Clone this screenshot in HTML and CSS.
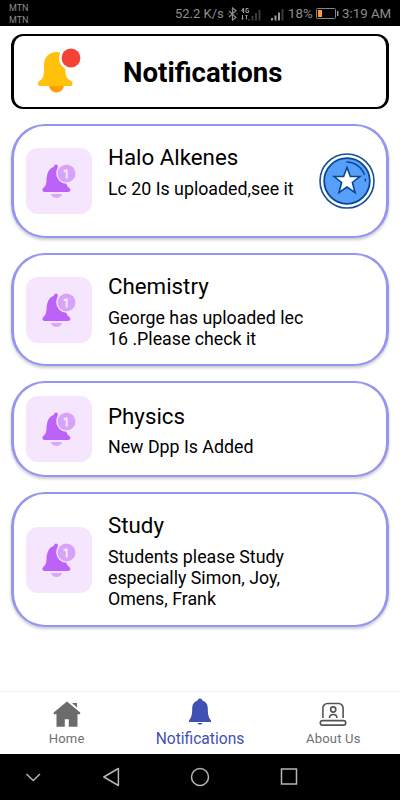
FILE: index.html
```html
<!DOCTYPE html>
<html lang="en">
  <head>
    <meta charset="UTF-8" />
    <meta name="viewport" content="width=device-width, initial-scale=1.0" />
    <title>Notifications</title>
    <link rel="stylesheet" href="styles.css">
  </head>
  <body>
    <svg class="sprite">
      <symbol id="bell" viewBox="0 0 66 66">
        <path d="M25 46h11c-1 3-3 4-5.500 4S26 49 25 46z" fill="#dba6fb" />
        <path d="M30.200 16.500c1.200 0 1.600.8 1.600 2-1 8 2 14 8.500 17 .8 2.600 1.700 3.500 3.300 4.800 1.600 1.700.7 3.700-1.400 3.700h-23c-2.600 0-3.600-2.200-2-3.800 2.500-2.400 3.100-4 3.300-8.200.3-7 2.500-11.500 7.500-13.200.2-1.500.8-2.300 2.200-2.300z" fill="#bd62f8" />
        <circle cx="40.500" cy="25.500" r="10.300" fill="#f5e6fe" />
        <circle cx="40.500" cy="25.500" r="9" fill="#d7a3fa" />
        <path d="M38.400 23.200l2.300-1v7.600" fill="none" stroke="#f5e6fe" stroke-width="2" stroke-linecap="round" stroke-linejoin="round" />
      </symbol>
    </svg>

    <div class="status-bar">
      <div class="carrier">
        <span>MTN</span>
        <span>MTN</span>
      </div>
      <div class="status">
        <span class="speed">52.2 K/s</span>
        <svg class="status-icons" width="61" height="16" viewBox="0 0 61 16">
          <path d="M2 5l7 6.500L5.500 14V2L9 4.500 2 11M.5 8h1M9.500 8h1" fill="none" stroke="#8c8c8c" stroke-width="1.200" />
          <g fill="none" stroke="#999" stroke-width="1">
            <path d="M16.500 2l-2 3h3M16.500 2v5M21.500 2.500h-2.500v4h2.500v-2h-1" />
            <path d="M15.500 9v4.500M14.500 12.500l1 1 1-1M19.500 13.500V9M18.500 10l1-1 1 1" />
          </g>
          <path d="M22 13v1.500M25.500 10v4.500M29 7v7.500M32.500 4v10.500" stroke="#393939" stroke-width="2" />
          <path d="M45 12v2.500M48.500 9.500v5M52 6.500v8" stroke="#999" stroke-width="2" />
          <path d="M55.500 3v11.500" stroke="#393939" stroke-width="2" />
        </svg>
        <span class="percent">18%</span>
        <svg class="battery" width="23" height="11" viewBox="0 0 23 11">
          <rect x=".5" y=".5" width="19" height="10" rx="1" fill="none" stroke="#858585" />
          <rect x="2" y="2" width="4" height="7" fill="#ff9a2e" />
          <path d="M21.700 3v5" stroke="#999" stroke-width="1.500" />
        </svg>
        <span class="time">3:19 AM</span>
      </div>
    </div>

    <div class="header">
      <svg class="header-bell" width="46" height="50" viewBox="0 0 46 50">
        <path d="M12 39h15a7.500 7.500 0 0 1-15 0z" fill="#ff9d05" />
        <path d="M19.500 6c3.400 0 6.500 1.300 8.800 3.500v14c0 7 1.800 9.500 6.400 12 1.800 1.800.8 4.500-1.700 4.500H3.500c-2.600 0-3.500-2.800-1.700-4.500C6 33 7 29.500 7 23v-5c0-7 5.500-12 12.500-12z" fill="#ffc109" />
        <circle cx="34" cy="12" r="12" fill="#fff" />
        <circle cx="34" cy="12" r="9.400" fill="#f44236" />
      </svg>
      <h1 class="page-title">Notifications</h1>
    </div>

    <div class="list">
      <div class="card">
        <div class="thumb"><svg width="66" height="66"><use href="#bell" /></svg></div>
        <div class="content">
          <div class="name">Halo Alkenes</div>
          <div class="message">Lc 20 Is uploaded,see it</div>
        </div>
        <svg class="medal" width="56" height="56" viewBox="0 0 56 56">
          <circle cx="28" cy="28" r="27" fill="#fff" stroke="#175096" stroke-width="1.600" />
          <circle cx="28" cy="28" r="22.800" fill="#579ffa" stroke="#064795" stroke-width="1.800" />
          <path d="M27.500 9A19 19 0 0 1 45.500 22M46.400 25.500v3" fill="none" stroke="#064795" stroke-width="1.500" />
          <path d="M28 14.500l3.400 9h9.500l-7.500 6 2.700 10.200L28 34l-8.100 5.700 2.700-10.200-7.500-6h9.500z" fill="#fff" stroke="#064795" stroke-width="1.600" />
        </svg>
      </div>
      <div class="card medium">
        <div class="thumb"><svg width="66" height="66"><use href="#bell" /></svg></div>
        <div class="content">
          <div class="name">Chemistry</div>
          <div class="message">George has uploaded lec<br />16 .Please check it</div>
        </div>
      </div>
      <div class="card small">
        <div class="thumb"><svg width="66" height="66"><use href="#bell" /></svg></div>
        <div class="content">
          <div class="name">Physics</div>
          <div class="message">New Dpp Is Added</div>
        </div>
      </div>
      <div class="card large">
        <div class="thumb"><svg width="66" height="66"><use href="#bell" /></svg></div>
        <div class="content">
          <div class="name">Study</div>
          <div class="message">Students please Study<br />especially Simon, Joy,<br />Omens, Frank</div>
        </div>
      </div>
    </div>

    <div class="tabs">
      <div class="tab">
        <svg width="28" height="28" viewBox="0 0 28 28">
          <path d="M14 1.500L.7 12.500v1.800h2.800v12.500h8.300v-7.500h4v7.500h8.700V14.300h2.700v-1.800z" fill="#6b6b6b" />
          <path d="M19 3h5v4.500z" fill="#6b6b6b" />
        </svg>
        <span class="tab-text">Home</span>
      </div>
      <div class="tab active">
        <svg width="28" height="28" viewBox="0 0 28 28">
          <path d="M14 .5c1.400 0 2.200.8 2.300 2 3.800 1.100 5.500 4 5.500 7.800 0 6.200.6 8.700 3.200 12.200V24H3v-1.500c2.600-3.500 3.200-6 3.200-12.200 0-3.800 1.700-6.700 5.500-7.800.1-1.200.9-2 2.300-2zM11.500 25h5c-.5 1.200-1.300 1.700-2.500 1.700s-2-.5-2.500-1.700z" fill="#3f51b5" />
        </svg>
        <span class="tab-text">Notifications</span>
      </div>
      <div class="tab">
        <svg width="28" height="28" viewBox="0 0 28 28">
          <g fill="none" stroke="#555" stroke-width="1.600">
            <path d="M3.900 18V8a4.500 4.500 0 0 1 4.500-4.500h11.200A4.500 4.500 0 0 1 24.100 8v10" />
            <rect x="1.300" y="20.600" width="25.400" height="4.500" rx="2.200" />
            <circle cx="14.200" cy="9.500" r="2.600" />
            <path d="M10.500 18c0-2.300 1.400-3.500 3.700-3.500s3.700 1.200 3.700 3.500" />
          </g>
        </svg>
        <span class="tab-text">About Us</span>
      </div>
    </div>

    <div class="system-nav">
      <svg width="16" height="28" viewBox="0 0 16 28"><path d="M1.500 11l6.700 6.500L15 11" /></svg>
      <svg class="back" width="18" height="28" viewBox="0 0 18 28"><path d="M16.400 5.500v17L1.800 14z" stroke-linejoin="round" /></svg>
      <svg width="20" height="28" viewBox="0 0 20 28"><circle cx="10" cy="14" r="8.500" /></svg>
      <svg width="18" height="28" viewBox="0 0 18 28"><rect x="1.500" y="6" width="15" height="15" /></svg>
    </div>
  </body>
</html>
```
FILE: styles.css
```css
* {
  padding: 0;
  margin: 0;
  box-sizing: border-box;
}
body {
  width: 400px;
  height: 800px;
  display: flex;
  flex-direction: column;
  overflow: hidden;
  background: #fff;
  color: #000;
  font-family: Roboto, "Liberation Sans", sans-serif;
}
svg {
  display: block;
  flex: none;
}
.sprite {
  width: 0;
  height: 0;
  position: absolute;
}
.status-bar {
  height: 26px;
  flex: none;
  padding: 0 9px;
  display: flex;
  justify-content: space-between;
  background: #000;
  color: #8e8e8e;
}
.carrier {
  display: flex;
  flex-direction: column;
  padding-top: 2px;
  font-size: 9px;
  line-height: 12px;
}
.status {
  display: flex;
  align-items: center;
  padding-top: 1px;
  font-size: 13.300px;
  white-space: nowrap;
}
.speed {
  width: 49px;
  font-size: 13px;
}
.status-icons {
  margin-left: 3px;
}
.percent {
  width: 26px;
}
.battery {
  margin: 0 3px 0 2px;
}
.time {
  width: 49px;
}
.header {
  height: 75px;
  flex: none;
  margin: 8px 11px 0;
  display: flex;
  align-items: center;
  border: 3px solid #000;
  border-width: 2px 3px;
  border-radius: 12px;
}
.header-bell {
  margin: -2px 0 0 23px;
}
.page-title {
  margin: 3px 0 0 40px;
  font-size: 27.600px;
  line-height: 32px;
  font-weight: 700;
  white-space: nowrap;
}
.list {
  flex: 1;
  padding: 15px 11px 0;
  display: flex;
  flex-direction: column;
  gap: 15px;
}
.card {
  height: 114px;
  display: flex;
  align-items: center;
  padding: 0 11px 0 12px;
  border: 3px solid #9795f0;
  border-width: 2px 3px;
  border-radius: 34px;
  box-shadow: 0 2px 3px rgba(0, 0, 0, 0.2);
}
.card.medium {
  height: 113px;
}
.card.small {
  height: 96px;
}
.card.large {
  height: 135px;
}
.thumb {
  width: 66px;
  height: 66px;
  flex: none;
  border-radius: 12px;
  background: #f5e6fe;
}
.content {
  flex: 1;
  align-self: flex-start;
  margin-left: 16px;
  padding-top: 18px;
  white-space: nowrap;
}
.small .content {
  padding-top: 20px;
}
.name {
  font-size: 22.300px;
  line-height: 26px;
}
.message {
  margin-top: 8px;
  font-size: 17.800px;
  line-height: 21px;
}
.small .message {
  margin-top: 7px;
}
.tabs {
  height: 63px;
  flex: none;
  display: flex;
  border-top: 1px solid #eee;
}
.tab {
  flex: 1;
  display: flex;
  flex-direction: column;
  align-items: center;
  padding-top: 8px;
  color: #6f6f6f;
}
.tab-text {
  margin-top: 3px;
  font-size: 13px;
  line-height: 16px;
  letter-spacing: 0.200px;
}
.tab.active {
  padding-top: 6px;
  color: #3f51b5;
}
.active .tab-text {
  margin-top: 5px;
  font-size: 15.600px;
  letter-spacing: 0;
}
.system-nav {
  height: 46px;
  flex: none;
  display: flex;
  align-items: center;
  gap: 70px;
  padding-left: 25px;
  background: #000;
}
.system-nav .back {
  margin-left: -9px;
}
.system-nav path,
.system-nav circle,
.system-nav rect {
  fill: none;
  stroke: #b5b5b5;
  stroke-width: 1.500;
}
```
